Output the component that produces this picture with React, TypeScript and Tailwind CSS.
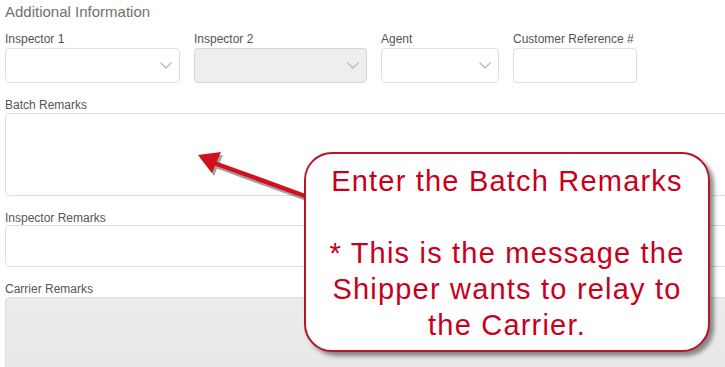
import React from 'react';

const Chevron = () => (
  <svg width="12" height="7" viewBox="0 0 12 7" fill="none" className="shrink-0">
    <path d="M0.8 0.8L6 6L11.2 0.8" stroke="#b3b3b3" strokeWidth="1.2" strokeLinecap="round" strokeLinejoin="round" />
  </svg>
);

const selects = [
  { label: 'Inspector 1', width: 'w-[175px]', disabled: false, chevron: true },
  { label: 'Inspector 2', width: 'w-[173px]', disabled: true, chevron: true },
  { label: 'Agent', width: 'w-[118px]', disabled: false, chevron: true },
  { label: 'Customer Reference #', width: 'w-[124px]', disabled: false, chevron: false },
];

export default function App() {
  return (
    <div className="relative w-[725px] h-[367px] overflow-hidden bg-white font-['Liberation_Sans',Arial,sans-serif]">
      <div className="pl-[5px] pt-[2px]">
        <h2 className="text-[15px] leading-[20px] text-[#707070]">Additional Information</h2>

        {/* top row of selects */}
        <div className="flex gap-[14px] mt-[10px]">
          {selects.map((s) => (
            <div key={s.label} className={s.width}>
              <div className="text-[12px] leading-[14px] text-[#555] mb-[2px] whitespace-nowrap">{s.label}</div>
              <div
                className={`h-[35px] rounded-[4px] border flex items-center justify-end pr-[7px] ${
                  s.disabled ? 'bg-[#eeeeee] border-[#d6d6d6]' : 'bg-white border-[#dedede]'
                }`}
              >
                {s.chevron && <Chevron />}
              </div>
            </div>
          ))}
        </div>

        <div className="mt-[15px] text-[12px] leading-[14px] text-[#555] mb-[1px]">Batch Remarks</div>
        <div className="w-[760px] h-[83px] rounded-[4px] border border-[#dedede] bg-white" />

        <div className="mt-[15px] text-[12px] leading-[14px] text-[#555]">Inspector Remarks</div>
        <div className="w-[760px] h-[42px] rounded-[4px] border border-[#dedede] bg-white" />

        <div className="mt-[15px] text-[12px] leading-[14px] text-[#555] mb-[1px]">Carrier Remarks</div>
        <div className="w-[760px] h-[90px] rounded-[4px] border border-[#dcdcdc] bg-gradient-to-b from-[#ececec] to-[#e8e8e8]" />
      </div>

      {/* arrow pointing at the batch remarks box */}
      <svg className="absolute left-[190px] top-[140px]" width="125" height="65" viewBox="0 0 125 65" fill="none">
        <g opacity="0.45" transform="translate(2 3)">
          <path d="M115 56L24 23" stroke="#333" strokeWidth="4.5" />
          <path d="M8 15L31 12L22 33Z" fill="#333" />
        </g>
        <path d="M115 56L24 23" stroke="#d3111d" strokeWidth="4.5" />
        <path d="M8 15L31 12L22 33Z" fill="#d3111d" />
      </svg>

      {/* callout */}
      <div className="absolute left-[304px] top-[152px] w-[406px] h-[200px] rounded-[28px] border-2 border-[#b8142c] bg-white shadow-[4px_4px_4px_rgba(50,50,50,0.55)] pt-[9px] text-center text-[29px] leading-[36px] tracking-[1.2px] text-[#c8001c]">
        <p>Enter the Batch Remarks</p>
        <p>&nbsp;</p>
        <p>* This is the message the</p>
        <p>Shipper wants to relay to</p>
        <p>the Carrier.</p>
      </div>
    </div>
  );
}
